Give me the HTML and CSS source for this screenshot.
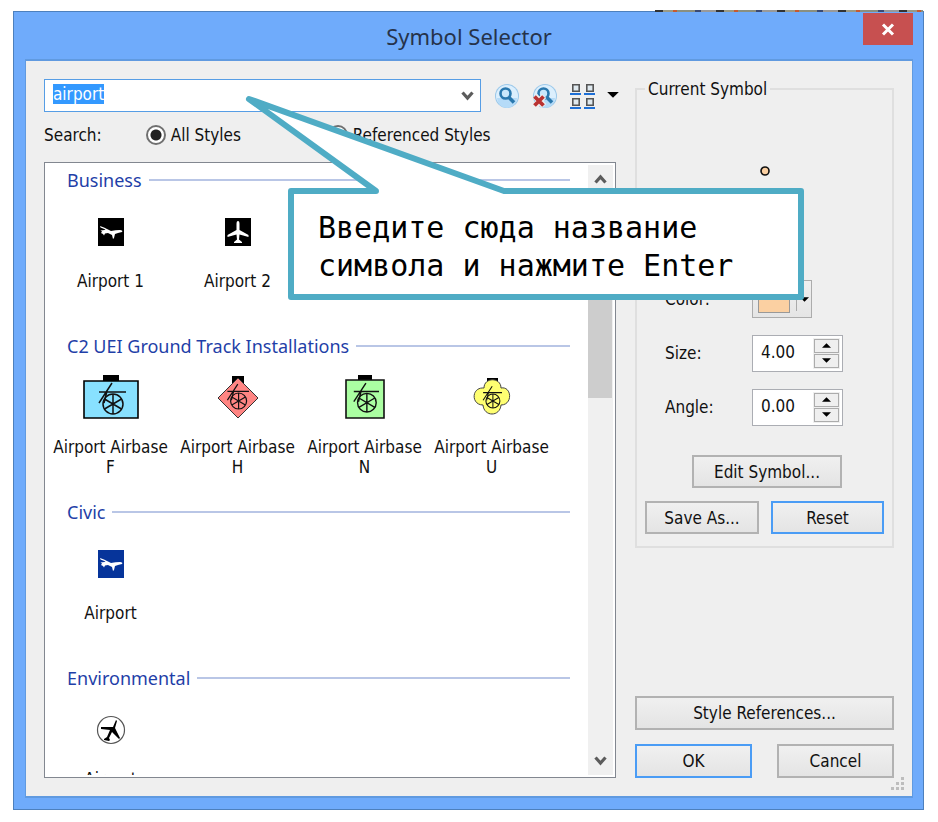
FILE: index.html
```html
<!DOCTYPE html>
<html lang="en">
<head>
<meta charset="utf-8">
<title>Symbol Selector</title>
<link rel="stylesheet" href="styles.css">
</head>
<body>
<svg width="0" height="0" class="defs" aria-hidden="true">
  <symbol id="jet" viewBox="0 0 26 28">
    <path fill="#fff" d="M2 8l4 1.500 3 1.500 4 2c3-.5 6-1 9-1 2 0 3 1 2 2l-4 1-3 1-1 4-1 1-1-4-4-2-3 .5-1 2-1-1.500-2-1 1-1.500-1.500-1 4-.5 1-.5-5-2z"/>
  </symbol>
  <symbol id="gun" viewBox="0 0 30 34">
    <g fill="none" stroke="currentColor" stroke-width="1.500">
      <circle cx="17" cy="22" r="10"/>
      <path d="M17 12v20M8.500 17l17 10M8.500 27l17-10M3 10h27M16 1L3 21M11 9l-3 12"/>
    </g>
  </symbol>
  <symbol id="up" viewBox="0 0 10 6"><path d="M5 0L10 5H0z"/></symbol>
  <symbol id="down" viewBox="0 0 10 6"><path d="M0 0H10L5 5z"/></symbol>
  <symbol id="chevron" viewBox="0 0 12 10"><path d="M1 1.500L6 7L11 1.500" fill="none" stroke="#5c5c5c" stroke-width="3.200"/></symbol>
  <symbol id="lens" viewBox="0 0 26 26">
    <circle cx="13" cy="13" r="12" fill="#9bc8ea"/>
    <circle cx="13" cy="13" r="11" fill="#dceffd"/>
    <path d="M3 15a10 10 0 0 0 20 0z" fill="#b5dbf8"/>
    <circle cx="11.500" cy="10.500" r="5" fill="#c9e7fb" stroke="#2a78ae" stroke-width="2.600"/>
    <path d="M15 14.500l5 5" stroke="#2a78ae" stroke-width="3.600"/>
  </symbol>
</svg>

<main class="window">
  <header class="titlebar">
    <h1>Symbol Selector</h1>
    <button class="close" type="button" aria-label="Close">
      <svg width="14" height="13" viewBox="0 0 14 13"><path d="M2 1.500l10 10M12 1.500l-10 10" stroke="#fff" stroke-width="3"/></svg>
    </button>
  </header>

  <div class="client">
    <section class="browser">
      <div class="searchbar">
        <div class="combo">
          <input id="query" type="text" value="airport" aria-label="Symbol name">
          <button type="button" aria-label="Recent searches"><svg width="13" height="10"><use href="#chevron"/></svg></button>
        </div>
        <div class="tools">
          <button type="button" aria-label="Search"><svg width="26" height="26"><use href="#lens"/></svg></button>
          <button type="button" aria-label="Clear search">
            <svg width="26" height="26" viewBox="0 0 26 26"><use href="#lens" width="26" height="26"/><path d="M3 13l9 10M12 13L3 23" stroke="#efefef" stroke-width="6"/><path d="M2.500 13.500l9 9M11.500 13.500l-9 9" stroke="#b93232" stroke-width="3.800"/></svg>
          </button>
          <button class="view" type="button" aria-label="View">
            <svg width="26" height="26" viewBox="0 0 26 26">
              <g fill="#dfe9ef" stroke="#555" stroke-width="1.600"><path d="M2.800 1.800h6.400v6.400H2.800zM16.800 1.800h6.400v6.400h-6.400zM2.800 15.800h6.400v6.400H2.800zM16.800 15.800h6.400v6.400h-6.400z"/></g>
              <path d="M0 11h11M14 11h11M0 25h11M14 25h11" stroke="#1d6fd6" stroke-width="2"/>
            </svg>
            <svg width="12" height="7"><use href="#down"/></svg>
          </button>
        </div>
      </div>

      <div class="scope" role="radiogroup" aria-labelledby="scope-label">
        <span id="scope-label">Search:</span>
        <label class="all"><input type="radio" name="scope" checked>All Styles</label>
        <label><input type="radio" name="scope">Referenced Styles</label>
      </div>

      <div class="list">
        <div class="groups">
          <section class="group">
            <h2>Business</h2>
            <ul>
              <li><span class="icon"><svg width="26" height="28"><rect width="26" height="28"/><use href="#jet"/></svg></span>Airport 1</li>
              <li><span class="icon"><svg width="26" height="28" viewBox="0 0 26 28"><rect width="26" height="28"/><path fill="#fff" d="M13 3c1 0 1.500 1 1.500 3v6l9 5v2l-9-2.500-.5 5 3 2.500v1h-8v-1l3-2.500-.5-5L2.500 19v-2l9-5V6c0-2 .5-3 1.500-3z"/></svg></span>Airport 2</li>
            </ul>
          </section>
          <section class="group">
            <h2>C2 UEI Ground Track Installations</h2>
            <ul>
              <li><span class="icon"><svg width="56" height="46" viewBox="0 0 56 46"><path d="M20 0h16v6H20z"/><path d="M1 6h54v37H1z" fill="#88e1ff" stroke="#000" stroke-width="1.600"/><use href="#gun" x="13" y="7" width="30" height="34"/></svg></span>Airport Airbase F</li>
              <li><span class="icon"><svg width="42" height="46" viewBox="0 0 42 46"><path d="M15 1h12v8H15z"/><path d="M21 3l20 20-20 20L1 23z" fill="#ff8583" stroke="#333"/><use href="#gun" x="8" y="8" width="24" height="28"/></svg></span>Airport Airbase H</li>
              <li><span class="icon"><svg width="40" height="46" viewBox="0 0 40 46"><path d="M13 0h14v6H13z"/><path d="M1 5h38v38H1z" fill="#abffa2" stroke="#111" stroke-width="1.600"/><use href="#gun" x="6" y="7" width="28" height="32"/></svg></span>Airport Airbase N</li>
              <li><span class="icon"><svg width="38" height="46" viewBox="0 0 38 46"><path d="M14 3h11v4H14z"/><path d="M11 13c0-11 17-11 17 0 11-2 12 17 0 17-1 12-17 12-18 0-12 0-12-18 1-17z" fill="#ffff71" stroke="#444"/><use href="#gun" x="8" y="10" width="21" height="25"/></svg></span>Airport Airbase U</li>
            </ul>
          </section>
          <section class="group">
            <h2>Civic</h2>
            <ul>
              <li><span class="icon"><svg width="26" height="28"><rect width="26" height="28" fill="#06349a"/><use href="#jet"/></svg></span>Airport</li>
            </ul>
          </section>
          <section class="group">
            <h2>Environmental</h2>
            <ul>
              <li><span class="icon"><svg width="30" height="30" viewBox="0 0 30 30"><circle cx="15" cy="15" r="13.500" fill="#fff" stroke="#555" stroke-width="1.200"/><path d="M20 5l1 1-2 7 5 10-1 1-7-7-3 6 1 2-1 1-5-1 0-1 3-2 3-7-9-1v-2l12 0 3-7z"/></svg></span>Airport</li>
            </ul>
          </section>
        </div>
        <div class="scrollbar">
          <svg width="13" height="10"><use href="#chevron" transform="rotate(180 6.500 5)"/></svg>
          <span class="thumb"></span>
          <svg width="13" height="10"><use href="#chevron"/></svg>
        </div>
      </div>
    </section>

    <aside class="side">
      <fieldset class="current">
        <legend>Current Symbol</legend>
        <div class="preview"><svg width="12" height="12" viewBox="0 0 12 12"><circle cx="6" cy="6" r="4" fill="#fbd0a2" stroke="#111" stroke-width="1.600"/></svg></div>
        <div class="field">
          <label for="color">Color:</label>
          <button id="color" class="color" type="button"><span class="swatch"></span><svg width="9" height="6"><use href="#down"/></svg></button>
        </div>
        <div class="field">
          <label for="size">Size:</label>
          <div class="spin">
            <input id="size" type="text" value="4.00">
            <div><button type="button" aria-label="Increase size"><svg width="9" height="6"><use href="#up"/></svg></button><button type="button" aria-label="Decrease size"><svg width="9" height="6"><use href="#down"/></svg></button></div>
          </div>
        </div>
        <div class="field">
          <label for="angle">Angle:</label>
          <div class="spin">
            <input id="angle" type="text" value="0.00">
            <div><button type="button" aria-label="Increase angle"><svg width="9" height="6"><use href="#up"/></svg></button><button type="button" aria-label="Decrease angle"><svg width="9" height="6"><use href="#down"/></svg></button></div>
          </div>
        </div>
        <button class="button edit" type="button">Edit Symbol...</button>
        <div class="pair">
          <button class="button" type="button">Save As...</button>
          <button class="button active" type="button">Reset</button>
        </div>
      </fieldset>
      <div class="actions">
        <button class="button" type="button">Style References...</button>
        <div class="pair wide">
          <button class="button active" type="button">OK</button>
          <button class="button" type="button">Cancel</button>
        </div>
      </div>
    </aside>
    <svg class="grip" width="14" height="14" viewBox="0 0 14 14" fill="#bdbdbd"><path d="M10 0h3v3h-3zM5 5h3v3H5zM10 5h3v3h-3zM0 10h3v3H0zM5 10h3v3H5zM10 10h3v3h-3z"/></svg>
  </div>

  <div class="callout" role="note">
    <svg width="562" height="208" viewBox="0 0 562 208"><path d="M5 5L260 97H557V203H47V97H132z" fill="#fff" stroke="#4facc5" stroke-width="6" stroke-linejoin="round"/></svg>
    <p>Введите сюда название<br>символа и нажмите Enter</p>
  </div>
</main>
<script src="script.js"></script>
</body>
</html>
```
FILE: styles.css
```css
* { box-sizing: border-box; }

body {
  margin: 0;
  min-height: 100vh;
  display: flex;
  padding: 11px 14px 12px 13px;
  background: #fff;
  color: #111;
  font: 17px/20px "DejaVu Sans Condensed", "DejaVu Sans", sans-serif;
}

.defs { position: absolute; }

button, input { font: inherit; color: inherit; margin: 0; }
button { padding: 0; border: 0; background: none; }
h1, h2, ul, p { margin: 0; padding: 0; font-weight: normal; }
svg { display: block; flex: none; }

.window {
  position: relative;
  flex: 1;
  display: flex;
  flex-direction: column;
  padding: 0 10px 11px 11px;
  background: #6fabfb;
  border: 1px solid #4d80bd;
}

.window::before {
  content: "";
  position: absolute;
  top: -2px;
  right: 0;
  width: 268px;
  height: 2px;
  background: repeating-linear-gradient(90deg, #333 0 8px, #9a9a86 8px 18px, #c65a32 18px 22px, #8a8f80 22px 40px, #3b4a72 40px 46px, #999 46px 61px);
}

.titlebar {
  position: relative;
  display: flex;
  justify-content: center;
  align-items: center;
  height: 47px;
}
.titlebar h1 { font: 22px/32px "Noto Sans", sans-serif; color: #26334a; }

.close {
  position: absolute;
  top: 1px;
  right: 0;
  width: 50px;
  height: 32px;
  display: grid;
  place-items: center;
  background: #c75050;
}

.client {
  position: relative;
  flex: 1;
  display: flex;
  gap: 19px;
  padding: 18px;
  background: #efefef;
  border: 2px solid #609ae0;
  border-width: 2px 1px 2px 1px;
}

.browser { flex: 1; min-width: 0; display: flex; flex-direction: column; }

.searchbar { display: flex; align-items: center; gap: 13px; margin-right: -3px; }

.combo {
  flex: 1;
  min-width: 0;
  display: flex;
  height: 33px;
  background: #fff;
  border: 1px solid #569de5;
}
.combo input {
  flex: 1;
  min-width: 0;
  padding: 0 8px 3px;
  border: 0;
  outline: 0;
  background: none;
}
.combo input::selection { background: #3399ff; color: #fff; }
.combo button { width: 26px; display: grid; place-items: center; }

.tools { display: flex; gap: 12px; }
.view { display: flex; align-items: center; gap: 11px; }

.scope { display: flex; align-items: center; height: 50px; padding-bottom: 4px; }
.scope label { display: flex; align-items: center; gap: 5px; }
.scope .all { width: 182px; margin-left: 44px; }

input[type="radio"] {
  appearance: none;
  width: 20px;
  height: 20px;
  border: 2px solid #707070;
  border-radius: 50%;
  background: #fff;
}
input[type="radio"]:checked { background: radial-gradient(circle, #222 5px, #fff 6px); }

.list {
  flex: 1 1 0;
  min-height: 0;
  display: flex;
  padding-bottom: 2px;
  overflow: hidden;
  background: #fff;
  border: 1px solid #828790;
}
.groups { flex: 1; min-width: 0; height: 0; min-height: 100%; overflow: hidden; }
.group { height: 166px; }

.group h2 {
  display: flex;
  align-items: center;
  gap: 7px;
  height: 34px;
  padding: 0 18px 0 22px;
  font: 18px/24px "Noto Sans", sans-serif;
  color: #1f3fa8;
}
.group h2::after { content: ""; flex: 1; height: 2px; background: #b9c6e6; }

.group ul { display: flex; list-style: none; padding-left: 2px; }
.group li { width: 127px; padding: 0 4px; text-align: center; }
.icon { display: grid; place-items: center; height: 70px; margin-bottom: 4px; }

.scrollbar {
  display: flex;
  flex-direction: column;
  align-items: center;
  width: 25px;
  margin: 2px 2px 0 0;
  padding: 9px 0;
  background: #f0f0f0;
}
.scrollbar .thumb {
  align-self: stretch;
  height: 208px;
  margin: 6px 1px auto 0;
  background: #cdcdcd;
}

.side { width: 259px; display: flex; flex-direction: column; justify-content: space-between; }

.current {
  min-width: 0;
  margin: 0;
  padding: 0 8px 12px;
  border: 2px solid #dfdfdf;
}
.current legend { margin-left: 0; padding: 0 3px; }

.preview { display: flex; justify-content: center; height: 173px; padding-top: 66px; }

.field { display: flex; align-items: center; height: 54px; padding-left: 20px; }
.field label { width: 87px; }

.color {
  display: flex;
  align-items: center;
  width: 60px;
  height: 38px;
  padding-left: 5px;
  border: 1px solid #acacac;
  background: linear-gradient(#f0f0f0, #e5e5e5);
}
.swatch { width: 32px; height: 28px; background: #fbd0a2; border: 1px solid #999; margin-right: 6px; }
.color svg { box-sizing: content-box; padding: 10px 0 8px 3px; border-left: 1px solid #aaa; }

.spin {
  display: flex;
  width: 91px;
  height: 37px;
  padding: 2px;
  border: 1px solid #abadb3;
  background: #fff;
}
.spin input { flex: 1; min-width: 0; border: 0; padding: 0 6px 3px; background: none; }
.spin > div { display: flex; flex-direction: column; gap: 1px; width: 27px; padding: 1px; background: #efefef; }
.spin button { flex: 1; display: grid; place-items: center; border: 1px solid #acacac; background: #efefef; }

.button {
  height: 33px;
  border: 2px solid #b2b2b2;
  background: linear-gradient(#f0f0f0, #e4e4e4);
  text-align: center;
}
.button.active { border-color: #4a9cf5; }
.edit { display: block; width: 150px; margin: 21px 0 13px 47px; }
.pair { display: grid; grid-template-columns: 114px 1fr; gap: 12px; }
.pair.wide { grid-template-columns: 1fr 1fr; gap: 25px; }

.actions { display: flex; flex-direction: column; gap: 14px; }
.actions .button { height: 34px; }

.grip { position: absolute; right: 7px; bottom: 5px; }

.callout { position: absolute; left: 230px; top: 82px; }
.callout p {
  position: absolute;
  left: 74px;
  top: 115px;
  white-space: nowrap;
  font: 30px/38px "DejaVu Sans Mono", monospace;
  color: #000;
}
```
FILE: script.js
```js
// Start with the search text selected, ready to be replaced.
const query = document.getElementById("query");
query.focus();
query.select();
```
